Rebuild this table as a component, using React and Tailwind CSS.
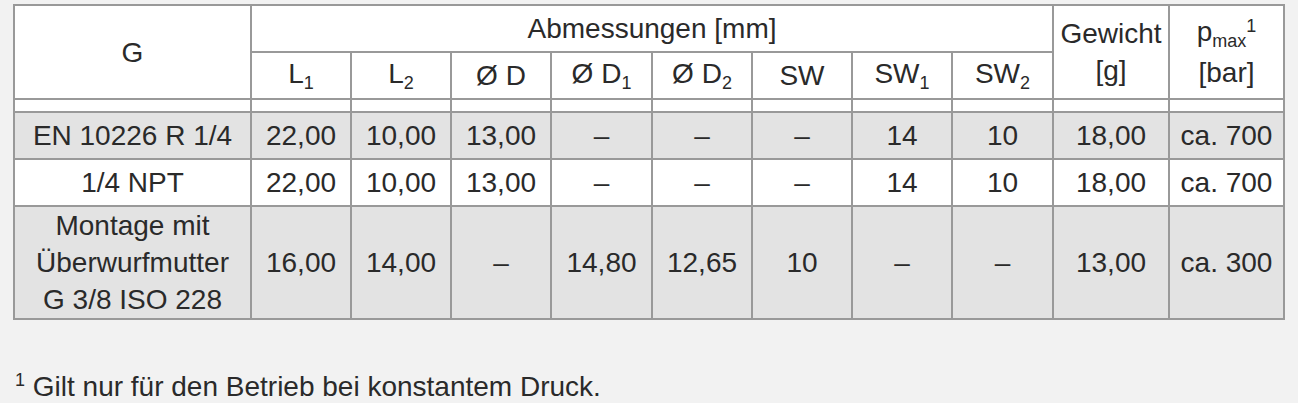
import React from "react";

const th = "border-2 border-[#999] text-center align-middle p-0 font-normal";
const td = "border-2 border-[#999] text-center align-middle p-0";

const Sub = ({ children }) => (
  <span className="relative top-[6px] text-[18px]">{children}</span>
);

const rows = [
  {
    bg: "bg-[#e3e3e3]",
    g: ["EN 10226 R 1/4"],
    vals: ["22,00", "10,00", "13,00", "–", "–", "–", "14", "10", "18,00", "ca. 700"],
  },
  {
    bg: "bg-white",
    g: ["1/4 NPT"],
    vals: ["22,00", "10,00", "13,00", "–", "–", "–", "14", "10", "18,00", "ca. 700"],
  },
  {
    bg: "bg-[#e3e3e3]",
    g: ["Montage mit", "Überwurfmutter", "G 3/8 ISO 228"],
    vals: ["16,00", "14,00", "–", "14,80", "12,65", "10", "–", "–", "13,00", "ca. 300"],
  },
];

const widths = [
  "w-[237px]",
  "w-[100px]",
  "w-[100px]",
  "w-[100px]",
  "w-[101px]",
  "w-[100px]",
  "w-[100px]",
  "w-[100px]",
  "w-[101px]",
  "w-[116px]",
  "w-[115px]",
];

export default function App() {
  return (
    <div className="min-h-[403px] bg-[#f2f2f2] pt-[4px] pl-[13px] font-['Liberation_Sans',Arial,sans-serif] text-[28px] leading-[37px] text-[#2a2a2a]">
      <table className="w-[1270px] table-fixed border-collapse">
        <colgroup>
          {widths.map((w, i) => (
            <col key={i} className={w} />
          ))}
        </colgroup>
        <thead className="bg-white">
          <tr className="h-[47px]">
            <th rowSpan={2} className={th}>
              G
            </th>
            <th colSpan={8} className={th}>
              Abmessungen [mm]
            </th>
            <th rowSpan={2} className={th}>
              Gewicht
              <br />
              [g]
            </th>
            <th rowSpan={2} className={th}>
              <span className="relative">
                p
                <Sub>max</Sub>
                <span className="relative top-[-9px] text-[18px]">1</span>
              </span>
              <br />
              [bar]
            </th>
          </tr>
          <tr className="h-[47px]">
            <th className={th}>
              L<Sub>1</Sub>
            </th>
            <th className={th}>
              L<Sub>2</Sub>
            </th>
            <th className={th}>Ø D</th>
            <th className={th}>
              Ø D<Sub>1</Sub>
            </th>
            <th className={th}>
              Ø D<Sub>2</Sub>
            </th>
            <th className={th}>SW</th>
            <th className={th}>
              SW<Sub>1</Sub>
            </th>
            <th className={th}>
              SW<Sub>2</Sub>
            </th>
          </tr>
          <tr className="h-[13px]">
            {widths.map((_, i) => (
              <th key={i} className={th + " leading-[9px]"}></th>
            ))}
          </tr>
        </thead>
        <tbody>
          {rows.map((r, i) => (
            <tr key={i} className={r.bg + (r.g.length > 1 ? " h-[111px]" : " h-[47px]")}>
              <td className={td}>
                {r.g.map((line, j) => (
                  <div key={j}>{line}</div>
                ))}
              </td>
              {r.vals.map((v, j) => (
                <td key={j} className={td}>
                  {v}
                </td>
              ))}
            </tr>
          ))}
        </tbody>
      </table>

      <p className="mt-[48px] pl-[2px]">
        <span className="relative top-[-10px] text-[18px]">1</span> Gilt nur für den Betrieb bei konstantem Druck.
      </p>
    </div>
  );
}
